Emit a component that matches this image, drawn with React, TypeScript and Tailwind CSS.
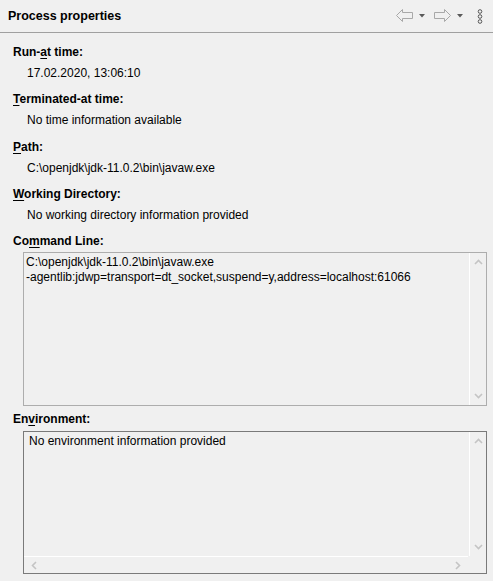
import React from "react";

const font = { fontFamily: '"Liberation Sans", Arial, sans-serif' };

function U({ children }: { children: React.ReactNode }) {
  return <span className="underline underline-offset-[2px] decoration-1">{children}</span>;
}

function Field({ label, value, extra }: { label: React.ReactNode; value: string; extra?: boolean }) {
  return (
    <div className={extra ? "flex flex-col mt-[1px]" : "flex flex-col"}>
      <div className="text-[12px] leading-[15px] font-bold text-black">{label}</div>
      <div className="mt-[6px] pl-[14px] text-[12px] leading-[15px] text-black">{value}</div>
    </div>
  );
}

function ChevUp() {
  return (
    <svg width="9" height="6" viewBox="0 0 9 6">
      <path d="M1 5 L4.5 1.5 L8 5" fill="none" stroke="#c4c4c4" strokeWidth="1.6" />
    </svg>
  );
}
function ChevDown() {
  return (
    <svg width="9" height="6" viewBox="0 0 9 6">
      <path d="M1 1 L4.5 4.5 L8 1" fill="none" stroke="#c4c4c4" strokeWidth="1.6" />
    </svg>
  );
}
function ChevLeft() {
  return (
    <svg width="6" height="9" viewBox="0 0 6 9">
      <path d="M5 1 L1.5 4.5 L5 8" fill="none" stroke="#c4c4c4" strokeWidth="1.6" />
    </svg>
  );
}
function ChevRight() {
  return (
    <svg width="6" height="9" viewBox="0 0 6 9">
      <path d="M1 1 L4.5 4.5 L1 8" fill="none" stroke="#c4c4c4" strokeWidth="1.6" />
    </svg>
  );
}

function VScroll() {
  return (
    <div className="w-[17px] border-l border-white flex flex-col items-center justify-between py-[6px]">
      <ChevUp />
      <ChevDown />
    </div>
  );
}

export default function App() {
  return (
    <div className="w-[493px] h-[581px] bg-[#f0f0f0] flex flex-col overflow-hidden" style={font}>
      <div className="h-[33px] border-b border-[#a0a0a0] flex items-center justify-between pl-[8px] pr-[10px]">
        <div className="text-[12.5px] font-bold text-black">Process properties</div>
        <div className="flex items-center">
          <svg width="17" height="13" viewBox="0 0 17 13" className="mb-[2px]">
            <path d="M0.5 6.5 L6.5 0.5 L6.5 3.5 L16.5 3.5 L16.5 9.5 L6.5 9.5 L6.5 12.5 Z" fill="#f0f0f0" stroke="#a8a8a8" strokeWidth="1" />
          </svg>
          <svg width="6" height="4" viewBox="0 0 6 4" className="ml-[6px]">
            <path d="M0 0 L6 0 L3 3.5 Z" fill="#5a5a5a" />
          </svg>
          <svg width="17" height="13" viewBox="0 0 17 13" className="ml-[9px] mb-[2px]">
            <path d="M16.5 6.5 L10.5 0.5 L10.5 3.5 L0.5 3.5 L0.5 9.5 L10.5 9.5 L10.5 12.5 Z" fill="#f0f0f0" stroke="#a8a8a8" strokeWidth="1" />
          </svg>
          <svg width="6" height="4" viewBox="0 0 6 4" className="ml-[6px]">
            <path d="M0 0 L6 0 L3 3.5 Z" fill="#5a5a5a" />
          </svg>
          <svg width="6" height="15" viewBox="0 0 6 15" className="ml-[14px]">
            <circle cx="3" cy="2.5" r="1.8" fill="none" stroke="#555" strokeWidth="1" />
            <circle cx="3" cy="7.5" r="1.8" fill="none" stroke="#555" strokeWidth="1" />
            <circle cx="3" cy="12.5" r="1.8" fill="none" stroke="#555" strokeWidth="1" />
          </svg>
        </div>
      </div>

      <div className="flex flex-col pl-[13px] pr-[6px] pt-[12px]">
        <div className="flex flex-col gap-[11px]">
          <Field label={<>Run-<U>a</U>t time:</>} value="17.02.2020, 13:06:10" />
          <Field label={<><U>T</U>erminated-at time:</>} value="No time information available" />
          <Field extra label={<><U>P</U>ath:</>} value="C:\openjdk\jdk-11.0.2\bin\javaw.exe" />
          <Field label={<><U>W</U>orking Directory:</>} value="No working directory information provided" />
          <div className="flex flex-col">
            <div className="text-[12px] leading-[15px] font-bold text-black">
              Co<U>m</U>mand Line:
            </div>
            <div className="mt-[3px] ml-[10px] h-[154px] border border-[#adadad] flex">
              <div className="flex-1 pl-[2px] pt-[2px] text-[12px] leading-[15px] text-black">
                <div>C:\openjdk\jdk-11.0.2\bin\javaw.exe</div>
                <div>-agentlib:jdwp=transport=dt_socket,suspend=y,address=localhost:61066</div>
              </div>
              <VScroll />
            </div>
          </div>
        </div>
        <div className="mt-[6px] flex flex-col">
          <div className="text-[12px] leading-[15px] font-bold text-black">
            En<U>v</U>ironment:
          </div>
          <div className="mt-[4px] ml-[10px] h-[143px] border border-[#7a7a7a] flex flex-col">
            <div className="flex-1 flex">
              <div className="flex-1 pl-[5px] pt-[2px] text-[12px] leading-[15px] text-black">
                No environment information provided
              </div>
              <VScroll />
            </div>
            <div className="h-[17px] flex">
              <div className="flex-1 border-t border-white flex items-center justify-between px-[7px]">
                <ChevLeft />
                <ChevRight />
              </div>
              <div className="w-[18px]" />
            </div>
          </div>
        </div>
      </div>
    </div>
  );
}
